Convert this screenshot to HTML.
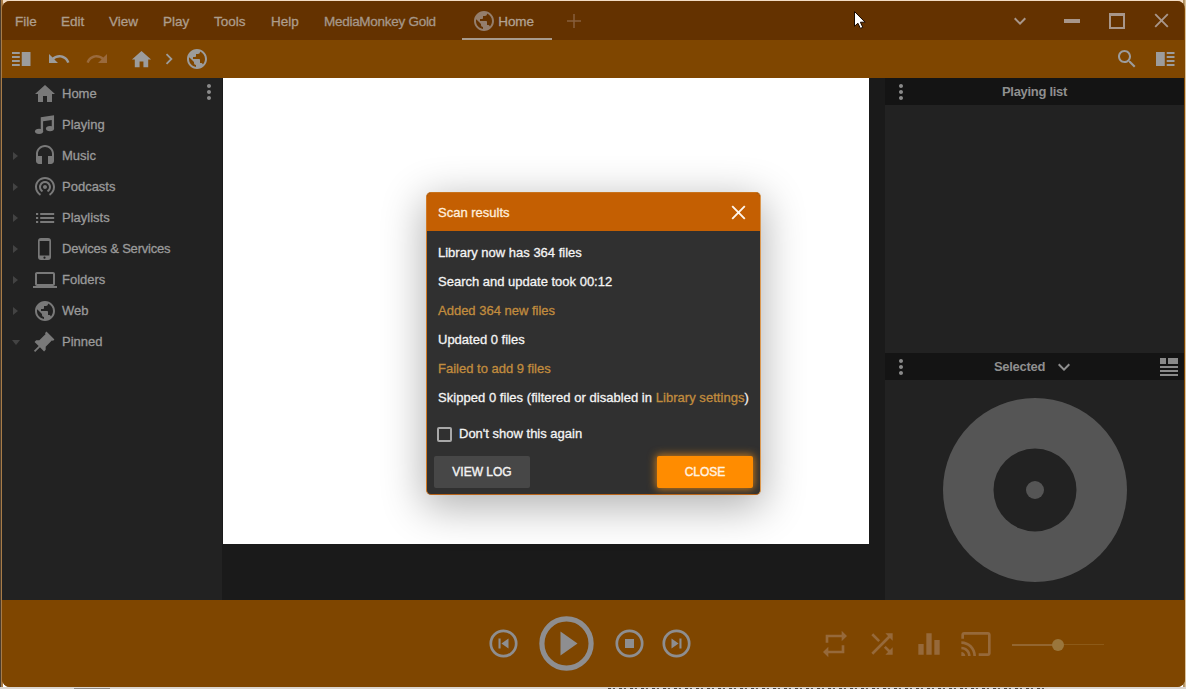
<!DOCTYPE html>
<html lang="en">
<head>
<meta charset="utf-8">
<title>MediaMonkey Gold</title>
<style>
*{box-sizing:border-box;margin:0;padding:0}
html,body{width:1186px;height:689px;overflow:hidden}
body{background:#ffffff;font-family:"Liberation Sans",Arial,sans-serif;font-size:13px;color:#9a9a9a;position:relative}
.abs{position:absolute}
#desk-top{left:0;top:0;width:1186px;height:6px;background:#f3dcc4}
#desk-left{left:0;top:0;width:3px;height:689px;background:linear-gradient(90deg,#4a3c2e 0,#4a3c2e 1px,#a87c48 1px,#a87c48 3px)}
#desk-right{left:1183px;top:0;width:3px;height:689px;background:linear-gradient(90deg,#a88858 0,#b89868 1.500px,#ecd8b8 3px)}
#win{left:2px;top:1px;width:1182.500px;height:686.400px;border-radius:8px;background:#7f4600;overflow:hidden}
#titlebar{left:0;top:0;width:1182px;height:39px;background:#643200}
#toolbar{left:0;top:39px;width:1182px;height:38px;background:#7f4600}
#sidebar{left:0;top:77px;width:220px;height:522px;background:#222222}
#center{left:220px;top:77px;width:663px;height:522px;background:#1a1a1a}
#white{left:221px;top:77px;width:646px;height:466px;background:#ffffff}
#right{left:883px;top:77px;width:299px;height:522px;background:#222222}
#player{left:0;top:599px;width:1183px;height:88px;background:#7f4600}
.menu{top:13px;font-size:13.5px;color:#ad9d8c;-webkit-text-stroke:0.3px #ad9d8c;white-space:nowrap;line-height:16px}
svg{display:block;position:absolute;overflow:visible}
.ti{fill:#9a9a9a}
.side-item{left:0;width:220px;height:31px}
.side-item .lbl{position:absolute;left:60px;top:8px;font-size:13px;line-height:16px;color:#9a9a9a;white-space:nowrap;-webkit-text-stroke:0.3px #9a9a9a}
.side-item svg{fill:#797979}
.tri{position:absolute;left:11px;top:11.500px;width:0;height:0;border-left:5px solid #434343;border-top:4px solid transparent;border-bottom:4px solid transparent}
.trid{position:absolute;left:10px;top:14px;width:0;height:0;border-top:5px solid #434343;border-left:4px solid transparent;border-right:4px solid transparent}
.phead{background:#141414;color:#8f8f8f;font-weight:bold;font-size:13px;letter-spacing:-0.3px;text-align:center;line-height:27px}
#dialog{left:424px;top:191px;width:335px;height:303px;background:#303030;border:1px solid #c8731c;border-left-color:#d27a24;border-right-color:#dc9850;border-bottom-color:#b8641a;border-radius:5px;box-shadow:0 10px 42px 3px rgba(0,0,0,0.30);overflow:visible}
#dhead{left:0;top:0;width:333px;height:38px;background:#c45f02;border-radius:4px 4px 0 0;color:#ffeedd;font-size:13px;line-height:16px;white-space:nowrap}
.dl{left:11px;font-size:13px;line-height:16px;color:#f4f4f4;white-space:nowrap;margin-top:1px;-webkit-text-stroke:0.3px currentColor}
.lk{color:#c18c3e}
.btn{font-size:12px;line-height:33px;-webkit-text-stroke:0.4px currentColor;text-align:center;border-radius:2px}
</style>
</head>
<body>
<div class="abs" id="desk-top"></div>
<div class="abs" id="desk-left"></div>
<div class="abs" id="desk-right"></div>
<div class="abs" style="left:0;top:687px;width:1186px;height:2px;background:#dcd6d0"></div>
<div class="abs" style="left:74px;top:688px;width:36px;height:1px;background:#8e8a86"></div>
<div class="abs" style="left:608px;top:687.500px;width:440px;height:1.500px;background:repeating-linear-gradient(90deg,#4a4643 0,#4a4643 3px,#cfc8c0 3px,#cfc8c0 5px,#5a5652 5px,#5a5652 7px,#d8d2cc 7px,#d8d2cc 11px)"></div>
<div class="abs" id="win">
  <div class="abs" id="titlebar">
    <span class="abs menu" style="left:13px">File</span>
    <span class="abs menu" style="left:59px">Edit</span>
    <span class="abs menu" style="left:107px">View</span>
    <span class="abs menu" style="left:161px">Play</span>
    <span class="abs menu" style="left:212px">Tools</span>
    <span class="abs menu" style="left:269px">Help</span>
    <span class="abs menu" style="left:322px;letter-spacing:-0.28px;color:#a5978a;-webkit-text-stroke-color:#a5978a">MediaMonkey Gold</span>
    <svg style="left:470px;top:7.500px" width="24" height="24" viewBox="0 0 24 24" fill="#947e6c"><path d="M12 2C6.48 2 2 6.48 2 12s4.48 10 10 10 10-4.480 10-10S17.520 2 12 2zm-1 17.930c-3.950-.49-7-3.850-7-7.930 0-.62.080-1.210.21-1.790L9 15v1c0 1.100.9 2 2 2v1.930zm6.900-2.540c-.26-.81-1-1.390-1.900-1.390h-1v-3c0-.55-.45-1-1-1H8v-2h2c.55 0 1-.45 1-1V7h2c1.100 0 2-.9 2-2v-.41c2.930 1.190 5 4.060 5 7.410 0 2.080-.8 3.970-2.100 5.390z"/></svg>
    <span class="abs menu" style="left:496.300px;top:12.500px;color:#b3a596;letter-spacing:-0.1px">Home</span>
    <div class="abs" style="left:460px;top:37px;width:90px;height:2px;background:#a89a8c"></div>
    <svg style="left:565.400px;top:13.200px" width="14" height="14" viewBox="0 0 14 14" stroke="#875f3c" stroke-width="1.500" fill="none"><path d="M7 0V14M0 7H14"/></svg>
    <svg style="left:1006px;top:8px" width="24" height="24" viewBox="0 0 24 24" fill="#a8968a"><path d="M16.590 8.590L12 13.170 7.410 8.590 6 10l6 6 6-6z"/></svg>
    <div class="abs" style="left:1062px;top:18px;width:16px;height:4px;background:#a8968a"></div>
    <div class="abs" style="left:1106.500px;top:12px;width:16.500px;height:16px;border:2px solid #a8968a;border-top-width:3px"></div>
    <svg style="left:1151.900px;top:12px" width="15" height="15" viewBox="0 0 15 15" stroke="#a8968a" stroke-width="1.900" fill="none"><path d="M1.200 1.200L13.800 13.800M13.800 1.200L1.200 13.800"/></svg>
  </div>
  <div class="abs" id="toolbar">
    <svg style="left:10px;top:12px" width="18.500" height="14" viewBox="0 0 19 14" preserveAspectRatio="none" fill="#9c9c9c"><rect x="0" y="0" width="8" height="2"/><rect x="0" y="4" width="8" height="2"/><rect x="0" y="8" width="8" height="2"/><rect x="0" y="12" width="8" height="2"/><rect x="10" y="0" width="9" height="14"/></svg>
    <svg style="left:44.500px;top:7px" width="24" height="24" viewBox="0 0 24 24" fill="#9c9c9c"><path d="M12.500 8c-2.650 0-5.050.99-6.900 2.600L2 7v9h9l-3.620-3.620c1.390-1.160 3.160-1.880 5.120-1.880 3.540 0 6.550 2.310 7.600 5.500l2.370-.78C21.080 11.030 17.150 8 12.500 8z"/></svg>
    <svg style="left:82.800px;top:7px" width="24" height="24" viewBox="0 0 24 24" fill="#9a6a3c"><path d="M18.400 10.600C16.550 8.990 14.150 8 11.500 8c-4.650 0-8.580 3.030-9.960 7.220L3.900 16c1.050-3.190 4.050-5.500 7.600-5.500 1.950 0 3.730.72 5.120 1.880L13 16h9V7l-3.600 3.600z"/></svg>
    <svg style="left:127.500px;top:7.500px" width="23" height="23" viewBox="0 0 24 24" fill="#9c9c9c"><path d="M10 20v-6h4v6h5v-8h3L12 3 2 12h3v8z"/></svg>
    <svg style="left:156px;top:8px" width="22" height="22" viewBox="0 0 24 24" fill="#9c9c9c"><path d="M10 6L8.590 7.410 13.170 12l-4.580 4.590L10 18l6-6z"/></svg>
    <svg style="left:183px;top:7px" width="24" height="24" viewBox="0 0 24 24" fill="#9c9c9c"><path d="M12 2C6.480 2 2 6.480 2 12s4.480 10 10 10 10-4.480 10-10S17.520 2 12 2zm-1 17.930c-3.950-.49-7-3.850-7-7.930 0-.62.080-1.210.21-1.790L9 15v1c0 1.100.9 2 2 2v1.930zm6.900-2.540c-.26-.81-1-1.390-1.900-1.390h-1v-3c0-.55-.45-1-1-1H8v-2h2c.55 0 1-.45 1-1V7h2c1.100 0 2-.9 2-2v-.41c2.930 1.190 5 4.060 5 7.410 0 2.080-.8 3.970-2.100 5.390z"/></svg>
    <svg style="left:1113px;top:7px" width="24" height="24" viewBox="0 0 24 24" fill="#9c9c9c"><path d="M15.500 14h-.79l-.28-.27C15.410 12.590 16 11.110 16 9.500 16 5.910 13.090 3 9.500 3S3 5.910 3 9.500 5.910 16 9.500 16c1.610 0 3.090-.59 4.230-1.570l.27.28v.79l5 4.990L20.490 19l-4.990-5zm-6 0C7.010 14 5 11.990 5 9.500S7.010 5 9.500 5 14 7.010 14 9.500 11.990 14 9.500 14z"/></svg>
    <svg style="left:1154px;top:12px" width="18.500" height="14" viewBox="0 0 19 14" preserveAspectRatio="none" fill="#9c9c9c"><rect x="11" y="0" width="8" height="2"/><rect x="11" y="4" width="8" height="2"/><rect x="11" y="8" width="8" height="2"/><rect x="11" y="12" width="8" height="2"/><rect x="0" y="0" width="9" height="14"/></svg>
  </div>
  <div class="abs" id="sidebar">
    <div class="abs side-item" style="top:0px"><svg style="left:31px;top:4px" width="24" height="24" viewBox="0 0 24 24"><path d="M10 20v-6h4v6h5v-8h3L12 3 2 12h3v8z"/></svg><span class="lbl">Home</span></div>
    <div class="abs side-item" style="top:31px"><svg style="left:33.050px;top:5.800px" width="20" height="19" viewBox="0 0 20 19"><ellipse cx="4.050" cy="16.300" rx="4.050" ry="2.600"/><ellipse cx="15" cy="13.600" rx="4.050" ry="2.650"/><path d="M5.750 2.300L19.050 0.250V13.600H16.750V4.950L8.100 6.260V16.300H5.750z"/></svg><span class="lbl">Playing</span></div>
    <div class="abs side-item" style="top:62px"><i class="tri"></i><svg style="left:31px;top:4px" width="24" height="24" viewBox="0 0 24 24"><path d="M12 1c-4.970 0-9 4.030-9 9v7c0 1.660 1.340 3 3 3h3v-8H5v-2c0-3.870 3.130-7 7-7s7 3.130 7 7v2h-4v8h3c1.660 0 3-1.340 3-3v-7c0-4.970-4.030-9-9-9z"/></svg><span class="lbl">Music</span></div>
    <div class="abs side-item" style="top:93px"><i class="tri"></i><svg style="left:31px;top:2.5px" width="24" height="24" viewBox="0 0 24 24"><path d="M12 11c-1.100 0-2 .9-2 2s.9 2 2 2 2-.9 2-2-.9-2-2-2zm6 2c0-3.310-2.690-6-6-6s-6 2.690-6 6c0 2.220 1.210 4.150 3 5.190l1-1.740c-1.190-.7-2-1.970-2-3.450 0-2.210 1.790-4 4-4s4 1.790 4 4c0 1.480-.81 2.750-2 3.450l1 1.740c1.790-1.040 3-2.970 3-5.190zM12 3C6.480 3 2 7.480 2 13c0 3.700 2.010 6.920 4.990 8.650l1-1.730C5.610 18.530 4 15.960 4 13c0-4.420 3.580-8 8-8s8 3.580 8 8c0 2.960-1.610 5.530-4 6.920l1 1.730c2.990-1.730 5-4.950 5-8.650 0-5.520-4.480-10-10-10z"/></svg><span class="lbl">Podcasts</span></div>
    <div class="abs side-item" style="top:124px"><i class="tri"></i><svg style="left:34px;top:11px" width="18.200" height="10" viewBox="0 0 18.200 10"><path d="M0 0h2.200v2H0zM0 4h2.200v2H0zM0 8h2.200v2H0zM4.200 0h14v2h-14zM4.200 4h14v2h-14zM4.200 8h14v2h-14z"/></svg><span class="lbl">Playlists</span></div>
    <div class="abs side-item" style="top:155px"><i class="tri"></i><svg style="left:36px;top:5px" width="13" height="22" viewBox="0 0 13 22"><rect x="0" y="0" width="13" height="22" rx="3" ry="3"/><rect x="1.700" y="3" width="9.600" height="14.500" fill="#202020"/><circle cx="6.500" cy="19.700" r="1.100" fill="#202020"/></svg><span class="lbl" style="letter-spacing:-0.2px">Devices &amp; Services</span></div>
    <div class="abs side-item" style="top:186px"><i class="tri"></i><svg style="left:31.300px;top:4px" width="24" height="24" viewBox="0 0 24 24"><path d="M20 18c1.100 0 1.990-.9 1.990-2L22 6c0-1.100-.9-2-2-2H4c-1.100 0-2 .9-2 2v10c0 1.100.9 2 2 2H0v2h24v-2h-4zM4 6h16v10H4V6z"/></svg><span class="lbl">Folders</span></div>
    <div class="abs side-item" style="top:217px"><i class="tri"></i><svg style="left:31px;top:3.500px" width="24" height="24" viewBox="0 0 24 24"><path d="M12 2C6.480 2 2 6.480 2 12s4.480 10 10 10 10-4.480 10-10S17.520 2 12 2zm-1 17.930c-3.950-.49-7-3.850-7-7.930 0-.62.080-1.210.21-1.790L9 15v1c0 1.100.9 2 2 2v1.930zm6.900-2.540c-.26-.81-1-1.390-1.900-1.390h-1v-3c0-.55-.45-1-1-1H8v-2h2c.55 0 1-.45 1-1V7h2c1.100 0 2-.9 2-2v-.41c2.930 1.190 5 4.060 5 7.410 0 2.080-.8 3.970-2.100 5.390z"/></svg><span class="lbl">Web</span></div>
    <div class="abs side-item" style="top:248px"><i class="trid"></i><svg style="left:27.200px;top:4.200px" width="27" height="27" viewBox="0 0 24 24"><path transform="rotate(45 12 12)" d="M16 12V4h1V2H7v2h1v8l-2 2v2h5.200v6h1.600v-6H18v-2l-2-2z"/></svg><span class="lbl">Pinned</span></div>
    <svg style="left:195px;top:2px" width="24" height="24" viewBox="0 0 24 24" fill="#8a8a8a"><path d="M12 8c1.100 0 2-.9 2-2s-.9-2-2-2-2 .9-2 2 .9 2 2 2zm0 2c-1.100 0-2 .9-2 2s.9 2 2 2 2-.9 2-2-.9-2-2-2zm0 6c-1.100 0-2 .9-2 2s.9 2 2 2 2-.9 2-2-.9-2-2-2z"/></svg>
  </div>
  <div class="abs" id="center"></div>
  <div class="abs" id="white"></div>
  <div class="abs" id="right">
    <div class="abs phead" style="left:0;top:0;width:299px;height:27px">Playing list</div>
    <svg style="left:4px;top:1.500px" width="24" height="24" viewBox="0 0 24 24" fill="#8a8a8a"><path d="M12 8c1.100 0 2-.9 2-2s-.9-2-2-2-2 .9-2 2 .9 2 2 2zm0 2c-1.100 0-2 .9-2 2s.9 2 2 2 2-.9 2-2-.9-2-2-2zm0 6c-1.100 0-2 .9-2 2s.9 2 2 2 2-.9 2-2-.9-2-2-2z"/></svg>
    <div class="abs phead" style="left:0;top:275px;width:299px;height:27px"><span style="position:relative;left:-15px">Selected</span></div>
    <svg style="left:4px;top:276.500px" width="24" height="24" viewBox="0 0 24 24" fill="#8a8a8a"><path d="M12 8c1.100 0 2-.9 2-2s-.9-2-2-2-2 .9-2 2 .9 2 2 2zm0 2c-1.100 0-2 .9-2 2s.9 2 2 2 2-.9 2-2-.9-2-2-2zm0 6c-1.100 0-2 .9-2 2s.9 2 2 2 2-.9 2-2-.9-2-2-2z"/></svg>
    <svg style="left:167px;top:277px" width="24" height="24" viewBox="0 0 24 24" fill="#8f8f8f"><path d="M16.590 8.590L12 13.170 7.410 8.590 6 10l6 6 6-6z"/></svg>
    <svg style="left:275px;top:280px" width="18" height="18" viewBox="0 0 18 18" fill="#8a8a8a"><rect x="0" y="0" width="6" height="6"/><rect x="8" y="0" width="10" height="6"/><rect x="0" y="8" width="18" height="2"/><rect x="0" y="12" width="18" height="2"/><rect x="0" y="16" width="18" height="2"/></svg>
    <svg style="left:57.500px;top:320px" width="184" height="184" viewBox="0 0 184 184"><circle cx="92" cy="92" r="92" fill="#555555"/><circle cx="92" cy="92" r="41.500" fill="#222222"/><circle cx="92" cy="92" r="9" fill="#555555"/></svg>
  </div>
  <div class="abs" id="player">
    <svg style="left:487px;top:29px" width="29" height="29" viewBox="0 0 29 29"><circle cx="14.500" cy="14.500" r="12.700" fill="none" stroke="#8e8e90" stroke-width="2.700"/><g transform="translate(4.500 4.500) scale(0.8333)" fill="#8e8e90"><path d="M6 6h2.500v12H6zm3.500 6l8.500 6V6z"/></g></svg>
    <svg style="left:537px;top:16px" width="55" height="55" viewBox="0 0 55 55"><circle cx="27.500" cy="27.500" r="24.600" fill="none" stroke="#8e8e90" stroke-width="5.200"/><path d="M21.500 15.500v24l17-12z" fill="#8e8e90"/></svg>
    <svg style="left:613px;top:29px" width="29" height="29" viewBox="0 0 29 29"><circle cx="14.500" cy="14.500" r="12.700" fill="none" stroke="#8e8e90" stroke-width="2.700"/><rect x="10" y="10" width="9" height="9" fill="#8e8e90"/></svg>
    <svg style="left:660px;top:29px" width="29" height="29" viewBox="0 0 29 29"><circle cx="14.500" cy="14.500" r="12.700" fill="none" stroke="#8e8e90" stroke-width="2.700"/><g transform="translate(4.500 4.500) scale(0.8333)" fill="#8e8e90"><path d="M6 18l8.500-6L6 6v12zM15.500 6v12H18V6h-2.500z"/></g></svg>
    <svg style="left:816.500px;top:27.500px" width="32" height="32" viewBox="0 0 24 24" fill="#96693a"><path d="M7 7h10v3l4-4-4-4v3H5v6h2V7zm10 10H7v-3l-4 4 4 4v-3h12v-6h-2v4z"/></svg>
    <svg style="left:863.700px;top:27.500px" width="32" height="32" viewBox="0 0 24 24" fill="#96693a"><path d="M10.590 9.170L5.410 4 4 5.410l5.170 5.170 1.420-1.410zM14.500 4l2.040 2.040L4 18.590 5.410 20 17.960 7.460 20 9.500V4h-5.500zm.33 9.410l-1.410 1.410 3.130 3.130L14.500 20H20v-5.500l-2.040 2.040-3.130-3.130z"/></svg>
    <svg style="left:910.900px;top:27.500px" width="32" height="32" viewBox="0 0 24 24" fill="#96693a"><path d="M10 20h4V4h-4v16zm-6 0h4v-8H4v8zM16 9v11h4V9h-4z"/></svg>
    <svg style="left:957.800px;top:27.500px" width="32" height="32" viewBox="0 0 24 24" fill="#96693a"><path d="M21 3H3c-1.100 0-2 .9-2 2v3h2V5h18v14h-7v2h7c1.100 0 2-.9 2-2V5c0-1.100-.9-2-2-2zM1 18v3h3c0-1.660-1.340-3-3-3zm0-4v2c2.760 0 5 2.240 5 5h2c0-3.870-3.130-7-7-7zm0-4v2c4.970 0 9 4.030 9 9h2c0-6.080-4.930-11-11-11z"/></svg>
    <div class="abs" style="left:1010px;top:43.500px;width:46px;height:2px;background:#936630"></div>
    <div class="abs" style="left:1056px;top:44px;width:46px;height:1px;background:#8c5a18"></div>
    <div class="abs" style="left:1050px;top:38.500px;width:12px;height:12px;border-radius:6px;background:#9a763c"></div>
  </div>
<div class="abs" id="dialog">
    <div class="abs" id="dhead"><span class="abs" style="left:11px;top:12px;-webkit-text-stroke:0.3px #ffeedd">Scan results</span>
      <svg style="left:303.700px;top:11.600px" width="15" height="15" viewBox="0 0 15 15" stroke="#fff6ec" stroke-width="1.900" fill="none"><path d="M1.200 1.200L13.800 13.800M13.800 1.200L1.200 13.800"/></svg>
    </div>
    <div class="abs dl" style="top:51px">Library now has 364 files</div>
    <div class="abs dl" style="top:80px">Search and update took 00:12</div>
    <div class="abs dl lk" style="top:109px">Added 364 new files</div>
    <div class="abs dl" style="top:138px">Updated 0 files</div>
    <div class="abs dl lk" style="top:167px">Failed to add 9 files</div>
    <div class="abs dl" style="top:196px;letter-spacing:0.04px">Skipped 0 files (filtered or disabled in <span class="lk">Library settings</span>)</div>
    <div class="abs" style="left:10px;top:234px;width:15px;height:15px;border:2px solid #a8a8a8;border-radius:2px"></div>
    <div class="abs dl" style="left:32px;top:232px">Don't show this again</div>
    <div class="abs btn" style="left:7px;top:263px;width:96px;height:32px;background:#474747;color:#f2f2f2">VIEW LOG</div>
    <div class="abs btn" style="left:230px;top:263px;width:96px;height:32px;background:#ff8c00;color:#fff3e0;box-shadow:0 0 8px 1px rgba(255,150,20,0.75)">CLOSE</div>
  </div>
  <svg style="left:851.600px;top:9.700px" width="13" height="19" viewBox="0 0 13 19"><path d="M0.500 0.500V15.300L3.900 12.200L6.400 17.400L8.800 16.300L6.400 11.200H11.100Z" fill="#ffffff" stroke="#1a0a00" stroke-width="1"/></svg>
</div>
</body>
</html>
